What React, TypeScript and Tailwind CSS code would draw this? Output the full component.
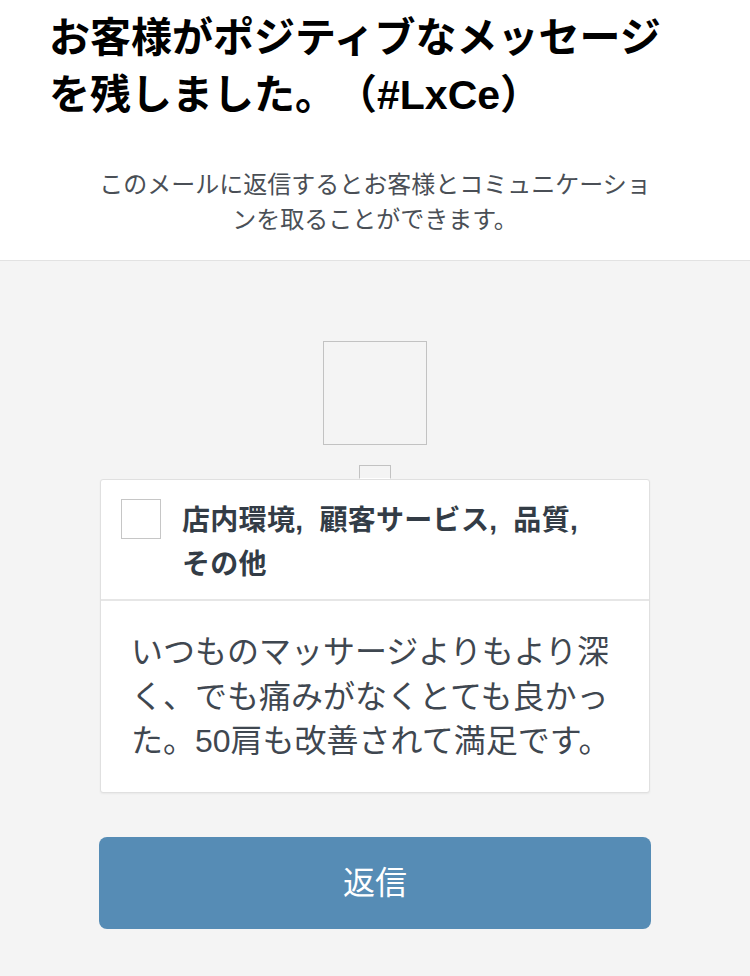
import React from "react";

const JP = '"Liberation Sans", "Noto Sans CJK JP", sans-serif';

export default function App() {
  return (
    <div className="w-[750px] min-h-[976px] bg-[#f4f4f4]" style={{ fontFamily: JP }}>
      <div className="bg-white border-b border-[#e2e2e2] pt-[10px] pb-[23px]">
        <h1 className="px-[49px] text-[41px] leading-[57px] font-bold text-black [text-spacing-trim:space-all]">
          お客様がポジティブなメッセージを残しました。（#LxCe）
        </h1>
        <p className="mx-auto mt-[43px] w-[560px] text-center text-[24px] leading-[35px] text-[#4a4f56]">
          このメールに返信するとお客様とコミュニケーションを取ることができます。
        </p>
      </div>
      <div className="flex flex-col items-center pt-[80px] pb-[47px]">
        <div className="w-[104px] h-[104px] border border-[#c2c2c2]" />
        <div className="mt-[20px] w-[32px] h-[14px] border border-[#c2c2c2] border-b-white relative z-10" />
        <div className="w-[550px] bg-white border border-[#e0e0e0] rounded-[3px] shadow-[0_1px_2px_rgba(0,0,0,0.05)]">
          <div className="flex pl-[20px] pr-[20px] pt-[19px] pb-[12px] border-b-2 border-[#e6e6e6]">
            <div className="w-[40px] h-[40px] shrink-0 border border-[#c6c6c6] bg-white" />
            <div className="ml-[21px] w-[432px] text-[28px] leading-[44px] font-bold text-[#333c46] tracking-[0.3px]">
              店内環境<span className="mr-[8px]">,</span> 顧客サービス<span className="mr-[8px]">,</span> 品質<span className="mr-[8px]">,</span> その他
            </div>
          </div>
          <div className="px-[30px] pt-[29px] pb-[28px] text-[32px] leading-[44.5px] text-[#3f4750]">
            いつものマッサージよりもより深く、でも痛みがなくとても良かった。50肩も改善されて満足です。
          </div>
        </div>
        <button className="mt-[44px] w-[552px] h-[92px] rounded-[8px] bg-[#568cb5] text-white text-[32px]">
          返信
        </button>
      </div>
    </div>
  );
}
